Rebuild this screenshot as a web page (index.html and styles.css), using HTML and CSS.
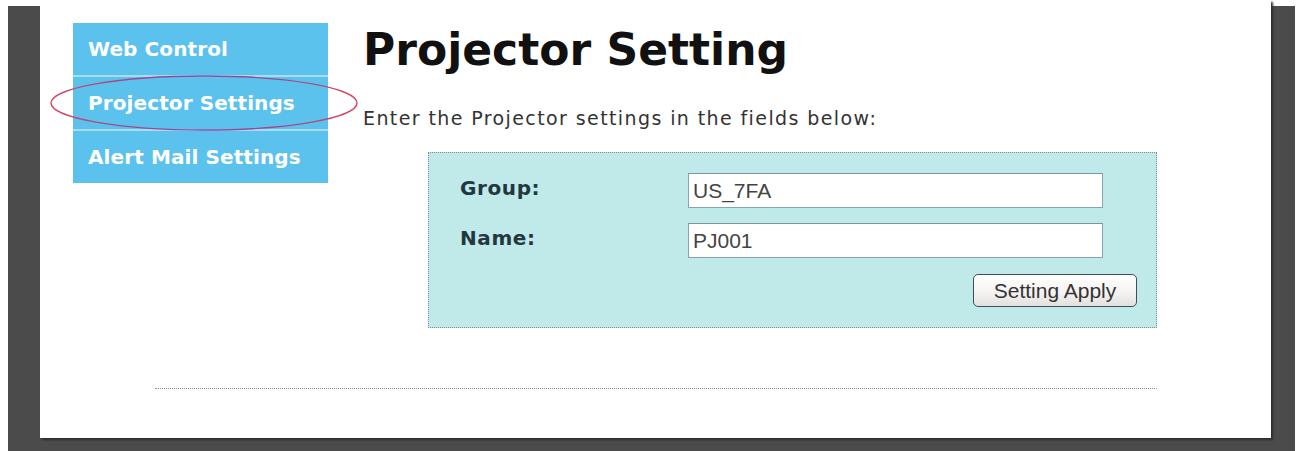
FILE: index.html
```html
<!DOCTYPE html>
<html lang="en">
<head>
<meta charset="utf-8">
<title>Projector Setting</title>
<link rel="stylesheet" href="styles.css">
</head>
<body>
<div class="frame">
  <div class="page">
    <div class="layout">
      <nav class="menu">
        <a class="menu-item" href="#">Web Control</a>
        <a class="menu-item" href="#">Projector Settings</a>
        <a class="menu-item" href="#">Alert Mail Settings</a>
      </nav>
      <main class="main">
        <h1 class="title">Projector Setting</h1>
        <p class="intro">Enter the Projector settings in the fields below:</p>
        <form class="settings">
          <div class="fields">
            <label class="label" for="group">Group:</label>
            <input class="field" id="group" type="text" value="US_7FA">
            <label class="label" for="name">Name:</label>
            <input class="field" id="name" type="text" value="PJ001">
          </div>
          <div class="actions">
            <button class="apply" type="button">Setting Apply</button>
          </div>
        </form>
      </main>
    </div>
    <hr class="rule">
    <svg class="mark" width="312" height="60" viewBox="0 0 312 60" aria-hidden="true">
      <defs>
        <linearGradient id="markStroke" x1="0" y1="0" x2="1" y2="0">
          <stop offset="0" stop-color="#d8455e"/>
          <stop offset="0.25" stop-color="#a04a8e"/>
          <stop offset="0.5" stop-color="#8a4aa6"/>
          <stop offset="0.75" stop-color="#a04a8e"/>
          <stop offset="1" stop-color="#d8455e"/>
        </linearGradient>
      </defs>
      <ellipse cx="156" cy="30" rx="153" ry="27" fill="none" stroke="url(#markStroke)" stroke-width="1.4"/>
    </svg>
  </div>
</div>
</body>
</html>
```
FILE: styles.css
```css
html, body {
  margin: 0;
  padding: 0;
  background: #ffffff;
}

body {
  font-family: "DejaVu Sans", Verdana, sans-serif;
  overflow: hidden;
}

/* dark viewer frame around the white page */
.frame {
  margin-left: 8px;
  width: 1287px;
  height: 451px;
  box-sizing: border-box;
  border-top: 6px solid #ffffff;
  background: #4b4b4b;
  padding: 0 24px 0 32px;
}

.page {
  position: relative;
  height: 438px;
  margin-top: -6px;
  background: #ffffff;
  box-shadow: 2px 2px 2px #2e2e2e;
  padding-top: 23px;
  box-sizing: border-box;
}

.layout {
  display: flex;
  padding-left: 33px;
}

/* left navigation */
.menu {
  display: flex;
  flex-direction: column;
  gap: 2px;
  width: 255px;
  background: #a9dcf3;
  align-self: flex-start;
}

.menu-item {
  display: flex;
  align-items: center;
  height: 52px;
  padding-left: 15px;
  background: #5bc2ee;
  color: #ffffff;
  font-weight: bold;
  font-size: 20px;
  letter-spacing: 0.1px;
  text-decoration: none;
}

/* main column */
.main {
  margin-left: 35px;
  padding-top: 5px;
}

.title {
  margin: 0;
  font-size: 44px;
  line-height: 44px;
  font-weight: bold;
  color: #111111;
}

.intro {
  margin: 37px 0 0;
  font-size: 19px;
  line-height: 19px;
  letter-spacing: 1.4px;
  color: #333333;
}

.settings {
  margin: 24px 0 0 65px;
  width: 729px;
  height: 176px;
  box-sizing: border-box;
  border: 1px dotted #7d8f93;
  background: #c0e9ea;
  padding: 20px 19px 0 31px;
}

.fields {
  display: grid;
  grid-template-columns: 228px 415px;
  row-gap: 15px;
  align-items: center;
}

.label {
  font-weight: bold;
  font-size: 20px;
  letter-spacing: 0.6px;
  color: #22373f;
  padding-bottom: 6px;
}

.field {
  height: 35px;
  box-sizing: border-box;
  border: 1px solid #8aa3b4;
  border-top-color: #7a93a5;
  background: #ffffff;
  font-family: "Liberation Sans", Arial, sans-serif;
  font-size: 21px;
  color: #444444;
  padding: 0 4px;
  margin: 0;
}

.actions {
  display: flex;
  justify-content: flex-end;
  margin-top: 16px;
}

.apply {
  width: 164px;
  height: 33px;
  border: 1px solid #3f4e56;
  border-radius: 5px;
  background: linear-gradient(#ffffff, #f4f2f0 60%, #e2e0dc);
  font-family: "Liberation Sans", Arial, sans-serif;
  font-size: 21px;
  color: #333333;
  padding: 0;
}

.rule {
  margin: 60px 0 0 115px;
  width: 1002px;
  height: 0;
  border: 0;
  border-top: 1px dotted #8a8a8a;
}

/* hand-drawn highlight around the active menu entry */
.mark {
  position: absolute;
  left: 8px;
  top: 73px;
}
```
